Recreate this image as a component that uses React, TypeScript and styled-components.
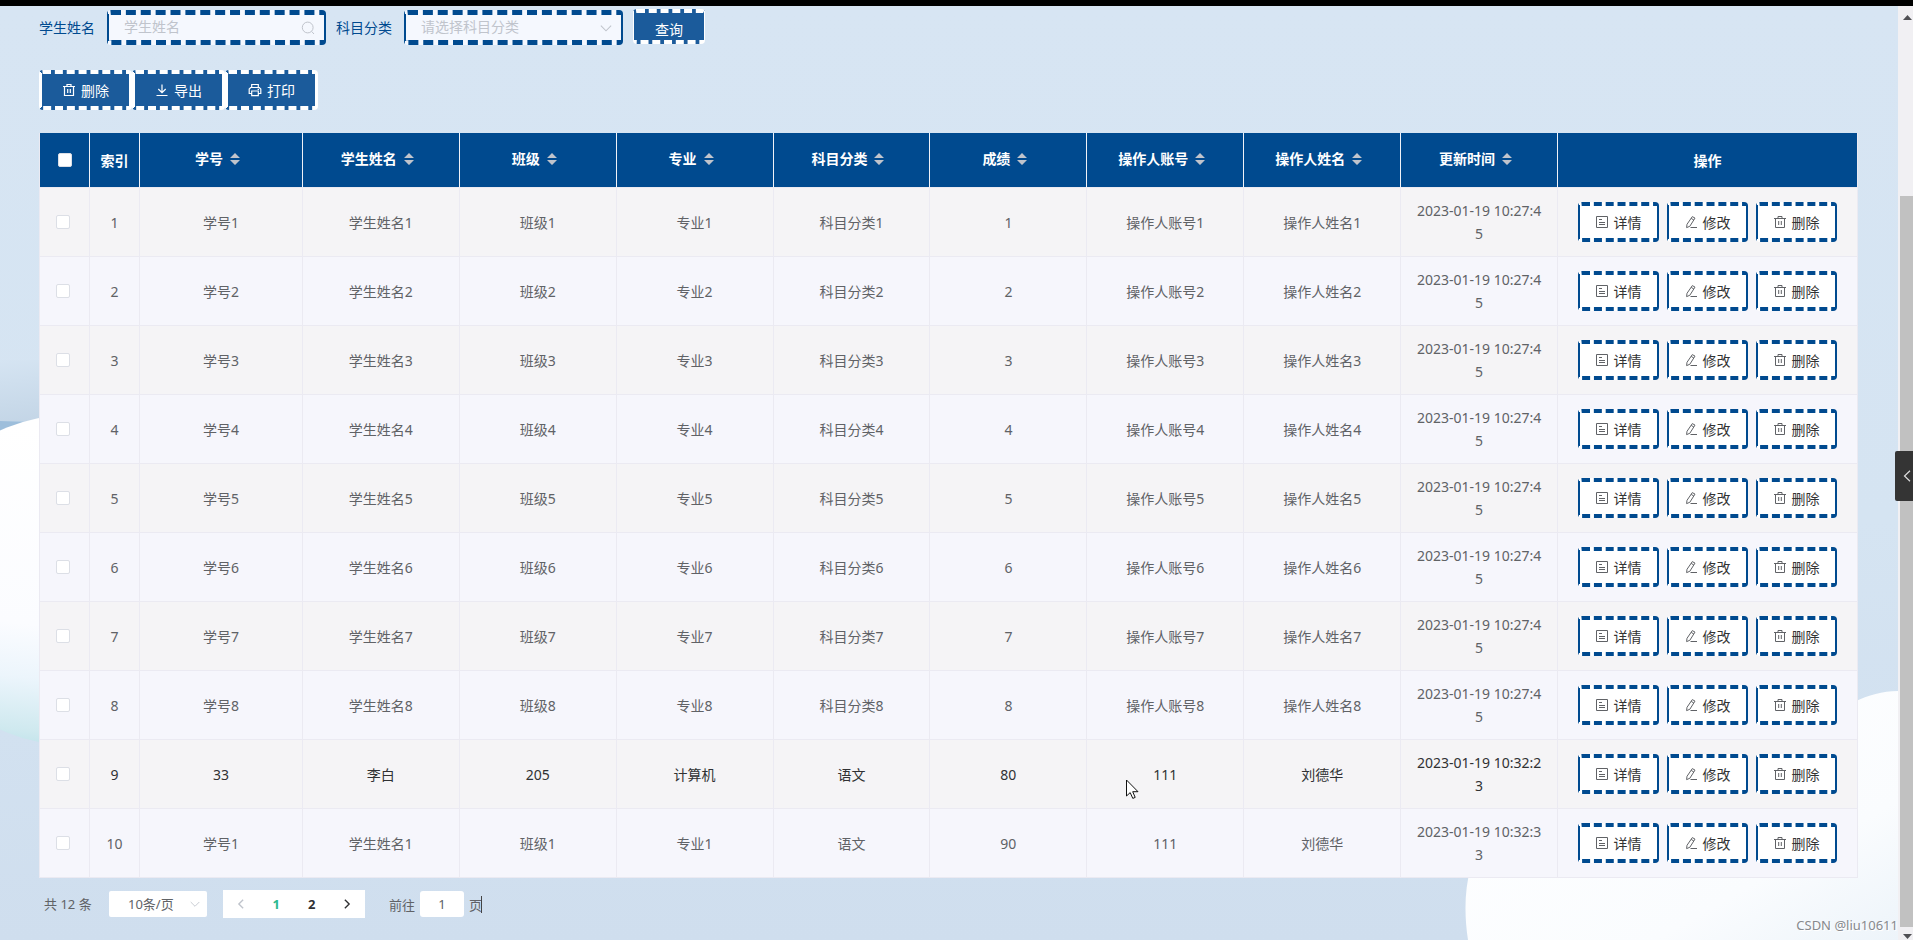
import React from 'react';
import styled, { createGlobalStyle, css } from 'styled-components';

const navy = '#004a8f';
const line = '#ebeaf2';

const GlobalStyle = createGlobalStyle`
  *, *::before, *::after { box-sizing: border-box; }
  body {
    margin: 0;
    font-family: "Noto Sans", "Noto Sans CJK SC", sans-serif;
    font-size: 14px;
    color: #606266;
    background: #d2e1f0;
  }
  button, input, select { font: inherit; margin: 0; }
  svg { display: block; }
`;

const Page = styled.div`
  position: relative;
  display: flex;
  flex-direction: column;
  min-height: 100vh;
`;

const TopBar = styled.div`
  height: 6px;
  background: #000;
`;

const Body = styled.div`
  display: flex;
  flex: 1;
`;

const Main = styled.main`
  position: relative;
  flex: 1;
  min-width: 0;
  overflow: hidden;
  padding: 3px 40px 20px 39px;
  background: linear-gradient(#d7e5f3, #d5e4f2 55%, #cfdeee);
`;

const Content = styled.div`
  position: relative;
`;

const LeftCloud = styled.svg`
  position: absolute;
  left: 0;
  bottom: 190px;
`;

const RightCloud = styled.svg`
  position: absolute;
  right: 0;
  bottom: 0;
`;

const SearchForm = styled.form`
  display: flex;
  align-items: center;
  height: 37px;
`;

const FormItem = styled.div`
  display: flex;
  align-items: center;
  gap: 12px;
  margin-right: 10px;
`;

const FormLabel = styled.label`
  padding-bottom: 2px;
  color: ${navy};
`;

const Field = styled.div`
  position: relative;
  width: 219px;
`;

const fieldBox = css`
  display: block;
  width: 100%;
  height: 35px;
  padding: 0 30px 2px 15px;
  border-color: ${navy};
  border-style: dashed solid;
  border-width: 5px 2px;
  border-radius: 4px;
  background: #f5f8fe;
  color: #c0c4cc;
  outline: none;
`;

const TextInput = styled.input`
  ${fieldBox}
  &::placeholder { color: #c0c4cc; opacity: 1; }
`;

const SelectInput = styled.select`
  ${fieldBox}
  appearance: none;
`;

const FieldIcon = styled.span`
  position: absolute;
  top: 50%;
  right: 11px;
  transform: translateY(-50%);
  color: #c0c4cc;
  pointer-events: none;
`;

const SolidButton = styled.button<{ $width: number; $height: number }>`
  display: inline-flex;
  align-items: center;
  justify-content: center;
  gap: 5px;
  width: ${p => p.$width}px;
  height: ${p => p.$height}px;
  padding: 0;
  border-color: #fff;
  border-style: dashed solid;
  border-width: 4px 3px;
  border-radius: 4px;
  background: #1b5b9b;
  color: #fff;
`;

const SearchButton = styled(SolidButton)`
  align-self: flex-start;
  padding-top: 4px;
  border-width: 4px 1px;
`;

const Toolbar = styled.div`
  display: flex;
  margin: 24px 0 23px;
`;

const Table = styled.table`
  width: 100%;
  table-layout: fixed;
  border-collapse: separate;
  border-spacing: 0;
  border-left: 1px solid ${line};
`;

const Col = styled.col<{ $w?: string }>`
  width: ${p => p.$w ?? 'auto'};
`;

const HeadCell = styled.th`
  height: 55px;
  padding: 0;
  border-right: 1px solid #f0f2f8;
  border-bottom: 1px solid ${line};
  background: ${navy};
  color: #fff;
  font-weight: 700;
  text-align: center;
  vertical-align: middle;
  &:last-child { border-right-color: ${line}; }
`;

const HeadInner = styled.div`
  display: flex;
  align-items: center;
  justify-content: center;
  padding-bottom: 3px;
  line-height: 23px;
`;

const SortButton = styled.button`
  display: flex;
  align-items: center;
  justify-content: center;
  width: 24px;
  height: 34px;
  padding: 0;
  border: 0;
  background: none;
  color: #c0c4cc;
`;

const Row = styled.tr<{ $dark?: boolean }>`
  background: #f6f6fc;
  color: ${p => (p.$dark ? '#303133' : '#606266')};
  &:nth-child(odd) { background: #f5f4f6; }
`;

const Cell = styled.td`
  height: 69px;
  padding: 0 14px;
  border-right: 1px solid ${line};
  border-bottom: 1px solid ${line};
  line-height: 23px;
  text-align: center;
  vertical-align: middle;
  word-break: break-all;
`;

const CheckCell = styled(Cell)`
  padding: 0 4px 0 0;
`;

const IndexCell = styled(Cell)`
  padding: 0;
`;

const Check = styled.input`
  appearance: none;
  display: block;
  width: 14px;
  height: 14px;
  margin: 0 auto;
  border: 1px solid #dcdfe6;
  border-radius: 2px;
  background: #fff;
`;

const Actions = styled.div`
  display: flex;
  justify-content: center;
  gap: 8px;
  margin: 0 -14px;
`;

const ActionButton = styled.button`
  display: flex;
  align-items: center;
  justify-content: center;
  gap: 5px;
  width: 81px;
  height: 40px;
  padding: 0 1px 0 0;
  border-color: ${navy};
  border-style: dashed solid;
  border-width: 4px 2px;
  border-radius: 4px;
  background: #fff;
  color: #333;
  white-space: nowrap;
  svg { color: #606266; }
`;

const Pagination = styled.nav`
  display: flex;
  align-items: center;
  height: 28px;
  margin-top: 12px;
  padding-left: 5px;
`;

const PageSize = styled.div`
  position: relative;
  width: 98px;
  margin: 0 16px;
`;

const PageSizeSelect = styled.select`
  appearance: none;
  display: block;
  width: 100%;
  height: 26px;
  padding: 0 0 0 19px;
  border: 0;
  border-radius: 2px;
  background: #fff;
  color: #606266;
  font-size: 13px;
`;

const PageSizeIcon = styled(FieldIcon)`
  right: 7px;
`;

const Pager = styled.div`
  display: flex;
  width: 142px;
  height: 28px;
  background: #fff;
`;

const PageButton = styled.button<{ $color: string }>`
  display: flex;
  flex: 1;
  align-items: center;
  justify-content: center;
  padding: 0;
  border: 0;
  background: none;
  color: ${p => p.$color};
  font-size: 13px;
  font-weight: 700;
`;

const Total = styled.span`
  width: 49px;
  padding-bottom: 2px;
  font-size: 13px;
  white-space: nowrap;
`;

const Jump = styled.label`
  display: flex;
  align-items: center;
  gap: 5px;
  margin-left: 24px;
  font-size: 13px;
`;

const JumpInput = styled.input`
  width: 44px;
  height: 26px;
  padding: 0;
  border: 0;
  border-radius: 3px;
  background: #fff;
  color: #606266;
  text-align: center;
`;

const Caret = styled.span`
  width: 1px;
  height: 17px;
  margin-left: -1px;
  background: #444;
`;

const ScrollRail = styled.div`
  display: flex;
  flex-direction: column;
  align-items: flex-end;
  width: 15px;
  background: #f1f0f3;
  color: #505054;
`;

const RailArrow = styled.div<{ $down?: boolean }>`
  display: flex;
  width: 10px;
  height: ${p => (p.$down ? 13 : 190)}px;
  padding-top: ${p => (p.$down ? 7 : 9)}px;
`;

const Thumb = styled.div`
  flex: 1;
  width: 13px;
  background: #c1c1c1;
`;

const SideTab = styled.button`
  position: absolute;
  top: 451px;
  right: 0;
  display: flex;
  align-items: center;
  justify-content: flex-end;
  width: 18px;
  height: 50px;
  padding: 0 2px 0 0;
  border: 0;
  border-radius: 2px 0 0 2px;
  background: #343434;
  color: #ddd;
`;

const Watermark = styled.div`
  position: absolute;
  right: 15px;
  bottom: 6px;
  font-family: "Noto Sans", sans-serif;
  font-size: 13px;
  line-height: 18px;
  color: #87898d;
  text-shadow: 1px 1px 0 #fff;
`;

const Pointer = styled.svg`
  position: absolute;
  left: 1126px;
  top: 779px;
`;

type IconProps = { size?: number; children: React.ReactNode; w?: number };
const Icon = ({ size = 14, w = 1, children }: IconProps) => (
  <svg width={size} height={size} viewBox="0 0 14 14" fill="none" stroke="currentColor" strokeWidth={w} aria-hidden="true">
    {children}
  </svg>
);

const TrashIcon = ({ w }: { w?: number }) => (
  <Icon w={w}>
    <path d="M1 3.5H13M2.5 3.5V12.5H11.5V3.5M5 3.5V1.5H9V3.5M5.7 6V10M8.3 6V10" />
  </Icon>
);
const DownloadIcon = () => (
  <Icon w={1.2}><path d="M7 1.5V9.5M3.3 6L7 9.7L10.7 6M1.5 12.5H12.5" /></Icon>
);
const PrinterIcon = () => (
  <Icon w={1.2}>
    <path d="M3.7 4.5V1.5H10.3V4.5M3.7 10.5H1.2V6L2.7 4.5H11.3L12.8 6V10.5H10.3M3.7 8H10.3V12.7H3.7ZM9.6 6.3H11" />
  </Icon>
);
const DetailIcon = () => (
  <Icon>
    <path d="M1.5 1.5H12.5V12.5H1.5ZM4 4.5H7M4 7.5H10M4 9.5H10" />
  </Icon>
);
const EditIcon = () => (
  <Icon>
    <path d="M8.3 1.6L11 3.1L5.8 11.3L2.6 12.6L3 9.3ZM7.2 3.4L9.8 5M6.5 12.5H13" />
  </Icon>
);
const SearchIcon = () => (
  <Icon><circle cx="6.7" cy="6.5" r="5.4" /><path d="M10.7 10.5L13 13" /></Icon>
);
const ChevronDown = ({ size = 12 }: { size?: number }) => (
  <Icon size={size} w={1.2}><path d="M1 4.2L7 10.2L13 4.2" /></Icon>
);
const SortIcon = () => (
  <svg width="10" height="12" viewBox="0 0 10 12" fill="currentColor" aria-hidden="true">
    <path d="M0 5L5 0L10 5ZM0 7L5 12L10 7Z" />
  </svg>
);

const sortable = ['学号', '学生姓名', '班级', '专业', '科目分类', '成绩', '操作人账号', '操作人姓名', '更新时间'];

const rows: string[][] = [
  ...Array.from({ length: 8 }, (_, i) => {
    const n = i + 1;
    return [`学号${n}`, `学生姓名${n}`, `班级${n}`, `专业${n}`, `科目分类${n}`, `${n}`, `操作人账号${n}`, `操作人姓名${n}`, '2023-01-19 10:27:45'];
  }),
  ['33', '李白', '205', '计算机', '语文', '80', '111', '刘德华', '2023-01-19 10:32:23'],
  ['学号1', '学生姓名1', '班级1', '专业1', '语文', '90', '111', '刘德华', '2023-01-19 10:32:33'],
];

export default function App() {
  return (
    <Page>
      <GlobalStyle />
      <TopBar />
      <Body>
        <Main>
          <LeftCloud width="240" height="390" viewBox="0 360 240 390" aria-hidden="true">
            <defs>
              <linearGradient id="shade" x1="0" y1="0" x2="0.2" y2="1">
                <stop offset="0" stopColor="#d5e4f2" />
                <stop offset="1" stopColor="#c3d5e6" />
              </linearGradient>
              <linearGradient id="ball" x1="0.1" y1="0" x2="0" y2="1">
                <stop offset="0" stopColor="#ffffff" />
                <stop offset="0.6" stopColor="#fbfcff" />
                <stop offset="0.76" stopColor="#ecf5fc" />
                <stop offset="0.92" stopColor="#cfe9ef" />
                <stop offset="1" stopColor="#b8dfe8" />
              </linearGradient>
            </defs>
            <path d="M0 360H120V424L0 421Z" fill="url(#shade)" />
            <path d="M0 421L120 424V440H0Z" fill="#9dbedb" />
            <circle cx="70" cy="580" r="165" fill="url(#ball)" />
          </LeftCloud>
          <RightCloud width="440" height="254" viewBox="0 0 440 254" aria-hidden="true">
            <defs>
              <linearGradient id="cloud" x1="0.3" y1="0.3" x2="1" y2="1">
                <stop offset="0" stopColor="#fdfeff" />
                <stop offset="0.6" stopColor="#fafcfe" />
                <stop offset="1" stopColor="#edf4fa" />
              </linearGradient>
            </defs>
            <path
              d="M440 5C424 5 411 9 396 16C300 60 100 70 30 145C8 175 4 215 10 254H440Z"
              fill="url(#cloud)"
            />
          </RightCloud>

          <Content>
            <SearchForm onSubmit={e => e.preventDefault()}>
              <FormItem>
                <FormLabel htmlFor="student">学生姓名</FormLabel>
                <Field>
                  <TextInput id="student" placeholder="学生姓名" />
                  <FieldIcon><SearchIcon /></FieldIcon>
                </Field>
              </FormItem>
              <FormItem>
                <FormLabel htmlFor="subject">科目分类</FormLabel>
                <Field>
                  <SelectInput id="subject">
                    <option>请选择科目分类</option>
                  </SelectInput>
                  <FieldIcon><ChevronDown /></FieldIcon>
                </Field>
              </FormItem>
              <SearchButton type="submit" $width={72} $height={35}>查询</SearchButton>
            </SearchForm>

            <Toolbar>
              <SolidButton type="button" $width={93} $height={40}><TrashIcon w={1.2} />删除</SolidButton>
              <SolidButton type="button" $width={93} $height={40}><DownloadIcon />导出</SolidButton>
              <SolidButton type="button" $width={93} $height={40}><PrinterIcon />打印</SolidButton>
            </Toolbar>

            <Table>
              <colgroup>
                <Col $w="50px" />
                <Col $w="50px" />
                <Col />
                {sortable.slice(1).map(name => <Col key={name} $w="8.63%" />)}
                <Col $w="300px" />
              </colgroup>
              <thead>
                <tr>
                  <HeadCell><Check type="checkbox" aria-label="全选" /></HeadCell>
                  <HeadCell>索引</HeadCell>
                  {sortable.map(name => (
                    <HeadCell key={name}>
                      <HeadInner>
                        {name}
                        <SortButton type="button" aria-label={`${name}排序`}><SortIcon /></SortButton>
                      </HeadInner>
                    </HeadCell>
                  ))}
                  <HeadCell>操作</HeadCell>
                </tr>
              </thead>
              <tbody>
                {rows.map((row, i) => (
                  <Row key={i} $dark={i === 8}>
                    <CheckCell><Check type="checkbox" aria-label={`选择第${i + 1}行`} /></CheckCell>
                    <IndexCell>{i + 1}</IndexCell>
                    {row.map((value, c) => <Cell key={c}>{value}</Cell>)}
                    <Cell>
                      <Actions>
                        <ActionButton type="button"><DetailIcon />详情</ActionButton>
                        <ActionButton type="button"><EditIcon />修改</ActionButton>
                        <ActionButton type="button"><TrashIcon />删除</ActionButton>
                      </Actions>
                    </Cell>
                  </Row>
                ))}
              </tbody>
            </Table>

            <Pagination aria-label="分页">
              <Total>共 12 条</Total>
              <PageSize>
                <PageSizeSelect aria-label="每页条数">
                  <option>10条/页</option>
                </PageSizeSelect>
                <PageSizeIcon><ChevronDown size={10} /></PageSizeIcon>
              </PageSize>
              <Pager>
                <PageButton type="button" $color="#c0c4cc" aria-label="上一页">
                  <Icon size={12} w={1.6}><path d="M9.5 2L4.5 7L9.5 12" /></Icon>
                </PageButton>
                <PageButton type="button" $color="#2bb98f">1</PageButton>
                <PageButton type="button" $color="#303133">2</PageButton>
                <PageButton type="button" $color="#303133" aria-label="下一页">
                  <Icon size={12} w={1.6}><path d="M4.5 2L9.5 7L4.5 12" /></Icon>
                </PageButton>
              </Pager>
              <Jump>
                前往
                <JumpInput defaultValue="1" />
                页
              </Jump>
              <Caret />
            </Pagination>
          </Content>
        </Main>
        <ScrollRail>
          <RailArrow>
            <svg width="9" height="5" viewBox="0 0 9 5" fill="currentColor"><path d="M0 5L4.5 0L9 5Z" /></svg>
          </RailArrow>
          <Thumb />
          <RailArrow $down>
            <svg width="9" height="5" viewBox="0 0 9 5" fill="currentColor"><path d="M0 0L4.5 5L9 0Z" /></svg>
          </RailArrow>
        </ScrollRail>
      </Body>
      <SideTab type="button" aria-label="展开侧栏">
        <svg width="8" height="12" viewBox="0 0 8 12" fill="none" stroke="currentColor" strokeWidth="1.2">
          <path d="M7 0.8L1.5 6L7 11.2" />
        </svg>
      </SideTab>
      <Watermark>CSDN @liu10611</Watermark>
      <Pointer width="13" height="21" viewBox="0 0 13 21" aria-hidden="true">
        <path d="M0.5 1V17L4.2 13.6L6.8 19.4L9.2 18.4L6.7 12.7H12Z" fill="#fff" stroke="#111" />
      </Pointer>
    </Page>
  );
}
